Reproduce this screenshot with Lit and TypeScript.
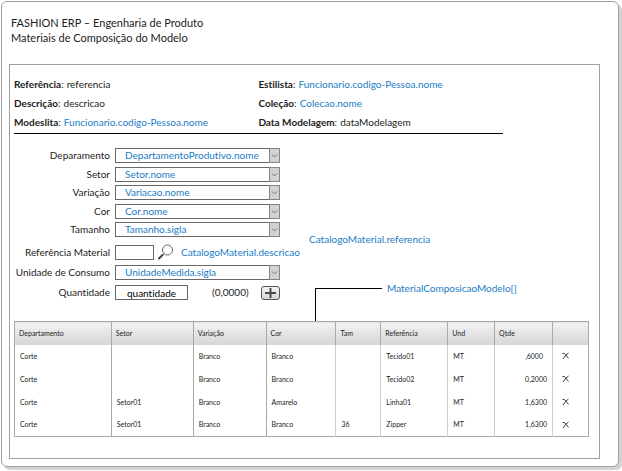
import { LitElement, html, css } from "lit";
import { customElement, property } from "lit/decorators.js";
import { classMap } from "lit/directives/class-map.js";
import { styleMap } from "lit/directives/style-map.js";

const baseText = css`
  :host {
    display: block;
    box-sizing: border-box;
    font-family: Lato, "Liberation Sans", sans-serif;
    font-size: 10px;
    font-variant-ligatures: none;
    line-height: 15px;
    color: #1c1c1c;
  }
  *, *::before, *::after {
    box-sizing: border-box;
  }
  .binding {
    color: #1b7cc6;
  }
`;

interface Info {
  label: string;
  value: string;
  bound: boolean;
}

const INFO: Info[] = [
  { label: "Referência", value: "referencia", bound: false },
  { label: "Estilista", value: "Funcionario.codigo-Pessoa.nome", bound: true },
  { label: "Descrição", value: "descricao", bound: false },
  { label: "Coleção", value: "Colecao.nome", bound: true },
  { label: "Modeslita", value: "Funcionario.codigo-Pessoa.nome", bound: true },
  { label: "Data Modelagem", value: "dataModelagem", bound: false },
];

const SELECTS = [
  { id: "departamento", label: "Deparamento", value: "DepartamentoProdutivo.nome" },
  { id: "setor", label: "Setor", value: "Setor.nome" },
  { id: "variacao", label: "Variação", value: "Variacao.nome" },
  { id: "cor", label: "Cor", value: "Cor.nome" },
  { id: "tamanho", label: "Tamanho", value: "Tamanho.sigla" },
];

const COLUMNS = [
  { title: "Departamento", share: 97, faint: false },
  { title: "Setor", share: 82, faint: false },
  { title: "Variação", share: 73, faint: false },
  { title: "Cor", share: 70, faint: false },
  { title: "Tam", share: 45, faint: true },
  { title: "Referência", share: 67, faint: true },
  { title: "Und", share: 47, faint: true },
  { title: "Qtde", share: 58, faint: true },
  { title: "", share: 36, faint: true },
];
const TOTAL = COLUMNS.reduce((sum, c) => sum + c.share, 0);

const ROWS = [
  ["Corte", "", "Branco", "Branco", "", "Tecido01", "MT", ",6000"],
  ["Corte", "", "Branco", "Branco", "", "Tecido02", "MT", "0,2000"],
  ["Corte", "Setor01", "Branco", "Amarelo", "", "Linha01", "MT", "1,6300"],
  ["Corte", "Setor01", "Branco", "Branco", "36", "Zipper", "MT", "1,6300"],
];

@customElement("model-info")
export class ModelInfo extends LitElement {
  static styles = [
    baseText,
    css`
      .info {
        display: grid;
        grid-template-columns: 1fr 1fr;
        grid-auto-rows: 19px;
        align-items: center;
        margin: 0;
        width: 85%;
        border-bottom: 1px solid #000;
        padding-bottom: 1px;
      }
      .pair {
        display: flex;
        gap: 3px;
        white-space: nowrap;
      }
      .value {
        margin: 0;
      }
    `,
  ];

  render() {
    return html`<dl class="info">
      ${INFO.map(
        (i) => html`<div class="pair">
          <dt><b>${i.label}</b>:</dt>
          <dd class=${classMap({ value: true, binding: i.bound })}>${i.value}</dd>
        </div>`
      )}
    </dl>`;
  }
}

@customElement("material-form")
export class MaterialForm extends LitElement {
  static styles = [
    baseText,
    css`
      .form {
        display: grid;
        grid-template-columns: 96px 165px;
        grid-template-rows: repeat(2, 19px 18px) 23px 20px 20px 15px;
        column-gap: 5px;
        white-space: nowrap;
      }
      .label {
        text-align: right;
      }
      .picker {
        display: grid;
        grid-template-columns: 1fr 11px;
        height: 15px;
      }
      .select,
      .text {
        appearance: none;
        height: 15px;
        margin: 0;
        border: 1px solid #686868;
        border-radius: 0;
        background: #fff;
        font: inherit;
        font-variant-ligatures: none;
        line-height: 13px;
        outline-offset: 1px;
      }
      .select {
        grid-area: 1 / 1 / 2 / 3;
        padding: 0 12px 0 9px;
        color: #1b7cc6;
      }
      .arrow {
        grid-area: 1 / 2;
        z-index: 1;
        pointer-events: none;
        width: 11px;
        height: 15px;
      }
      .line {
        display: flex;
        align-items: center;
        height: 15px;
      }
      .text {
        padding: 0;
        color: #000;
        text-align: center;
      }
      .code {
        width: 39px;
      }
      .quantity {
        width: 73px;
      }
      .search {
        border: 0;
        padding: 0;
        margin: 0 7px 0 3px;
        background: none;
        width: 17px;
        height: 17px;
      }
      .icon {
        display: block;
      }
      .format {
        margin-left: 24px;
      }
      .add {
        display: grid;
        place-items: center;
        margin-left: auto;
        width: 19px;
        height: 14px;
        padding: 0;
        border: 1px solid #555;
        border-radius: 3px;
        background: linear-gradient(#f4f4f4, #d4d4d4);
      }
    `,
  ];

  private picker(id: string, label: string, value: string) {
    return html`<label class="label" for=${id}>${label}</label>
      <div class="picker">
        <select class="select" id=${id}>
          <option>${value}</option>
        </select>
        <svg class="arrow" viewBox="0 0 11 15" aria-hidden="true">
          <rect x="0.5" y="0.5" width="10" height="14" fill="#d2d2d2" stroke="#858585" />
          <path d="M3 6.5 L5.5 9 L8 6.5" fill="none" stroke="#777" />
        </svg>
      </div>`;
  }

  render() {
    return html`<form class="form" @submit=${(e: Event) => e.preventDefault()}>
      ${SELECTS.map((s) => this.picker(s.id, s.label, s.value))}
      <label class="label" for="material">Referência Material</label>
      <div class="line">
        <input class="text code" id="material" />
        <button class="search" type="button" aria-label="Pesquisar material">
          <svg class="icon" width="17" height="17" viewBox="0 0 17 17">
            <circle cx="10.5" cy="6" r="5" fill="#fff" stroke="#666" />
            <path d="M7 9.5 L5.5 11" stroke="#666" />
            <path d="M5.5 11 L2 14.5" stroke="#444" stroke-width="2" stroke-linecap="round" />
          </svg>
        </button>
        <span class="binding">CatalogoMaterial.descricao</span>
      </div>
      ${this.picker("unidade", "Unidade de Consumo", "UnidadeMedida.sigla")}
      <label class="label" for="quantidade">Quantidade</label>
      <div class="line">
        <input class="text quantity" id="quantidade" value="quantidade" />
        <span class="format">(0,0000)</span>
        <button class="add" type="button" aria-label="Adicionar">
          <svg class="icon" width="11" height="10" viewBox="0 0 11 10">
            <path d="M5.5 0 V10 M0 5 H11" stroke="#4a4a4a" stroke-width="2" />
          </svg>
        </button>
      </div>
    </form>`;
  }
}

@customElement("material-table")
export class MaterialTable extends LitElement {
  @property({ attribute: false }) rows: string[][] = ROWS;

  static styles = [
    baseText,
    css`
      .table {
        width: 100%;
        table-layout: fixed;
        border-collapse: collapse;
        border: 1px solid #a8a8a8;
        font-size: 7px;
        white-space: nowrap;
      }
      .head {
        height: 23px;
        padding: 0 4px;
        border-left: 1px solid #a8a8a8;
        background: linear-gradient(#f2f2f2, #d6d6d6);
        font-weight: 400;
        text-align: left;
      }
      .cell {
        height: 23px;
        padding: 0 5px;
        border-left: 1px solid #a8a8a8;
      }
      .faint {
        border-left-color: #cdcdcd;
      }
      .number {
        text-align: right;
      }
      .number.short {
        padding-right: 9px;
      }
      .delete {
        display: block;
        margin-left: 4px;
        padding: 0;
        border: 0;
        background: none;
      }
      .icon {
        display: block;
      }
    `,
  ];

  render() {
    return html`<table class="table">
      <colgroup>
        ${COLUMNS.map((c) => html`<col style=${styleMap({ width: `${(c.share / TOTAL) * 100}%` })} />`)}
      </colgroup>
      <thead>
        <tr>
          ${COLUMNS.map((c) => html`<th class="head" scope="col">${c.title}</th>`)}
        </tr>
      </thead>
      <tbody>
        ${this.rows.map(
          (row) => html`<tr>
            ${row.map(
              (text, i) =>
                html`<td
                  class=${classMap({
                    cell: true,
                    faint: COLUMNS[i].faint,
                    number: i === 7,
                    short: text.startsWith(","),
                  })}
                >${text}</td>`
            )}
            <td class="cell faint">
              <button class="delete" type="button" aria-label="Excluir">
                <svg class="icon" width="8" height="8" viewBox="0 0 8 8">
                  <path d="M0.5 1.5 H2.5 L6.5 6.5" fill="none" stroke="#444" />
                  <path d="M6.5 1 L4 3 L1 7" fill="none" stroke="#444" />
                </svg>
              </button>
            </td>
          </tr>`
        )}
      </tbody>
    </table>`;
  }
}

@customElement("app-root")
export class AppRoot extends LitElement {
  static styles = [
    baseText,
    css`
      :host {
        padding: 1px 3px 4px 1px;
      }
      .window {
        padding: 13px 18px 7px 7px;
        border: 1px solid #a0a0a0;
        border-radius: 6px;
        background: #fff;
        box-shadow: 3px 3px 0 #d3d3d3;
      }
      .title {
        margin: 0 0 19px 2px;
        font-size: 11px;
        font-weight: 400;
      }
      .line {
        display: block;
      }
      .panel {
        padding: 10px 10px 21px 4px;
        border: 1px solid #a0a0a0;
      }
      .entry {
        display: flex;
        margin-top: 14px;
      }
      .fields {
        padding-bottom: 21px;
      }
      .notes {
        display: flex;
        flex-direction: column;
        justify-content: space-between;
        margin-left: 29px;
        padding-top: 84px;
        white-space: nowrap;
      }
      .callout {
        display: flex;
        gap: 5px;
        height: 40px;
        margin-left: 6px;
      }
      .connector {
        align-self: flex-end;
        width: 67px;
        height: 33px;
        border-top: 1px solid #000;
        border-left: 1px solid #000;
      }
    `,
  ];

  render() {
    return html`<main class="window">
      <h1 class="title">
        <span class="line">FASHION ERP – Engenharia de Produto</span>
        <span class="line">Materiais de Composição do Modelo</span>
      </h1>
      <section class="panel">
        <model-info></model-info>
        <div class="entry">
          <material-form class="fields"></material-form>
          <div class="notes binding">
            <span>CatalogoMaterial.referencia</span>
            <div class="callout">
              <span class="connector"></span>
              <span>MaterialComposicaoModelo[]</span>
            </div>
          </div>
        </div>
        <material-table></material-table>
      </section>
    </main>`;
  }
}
